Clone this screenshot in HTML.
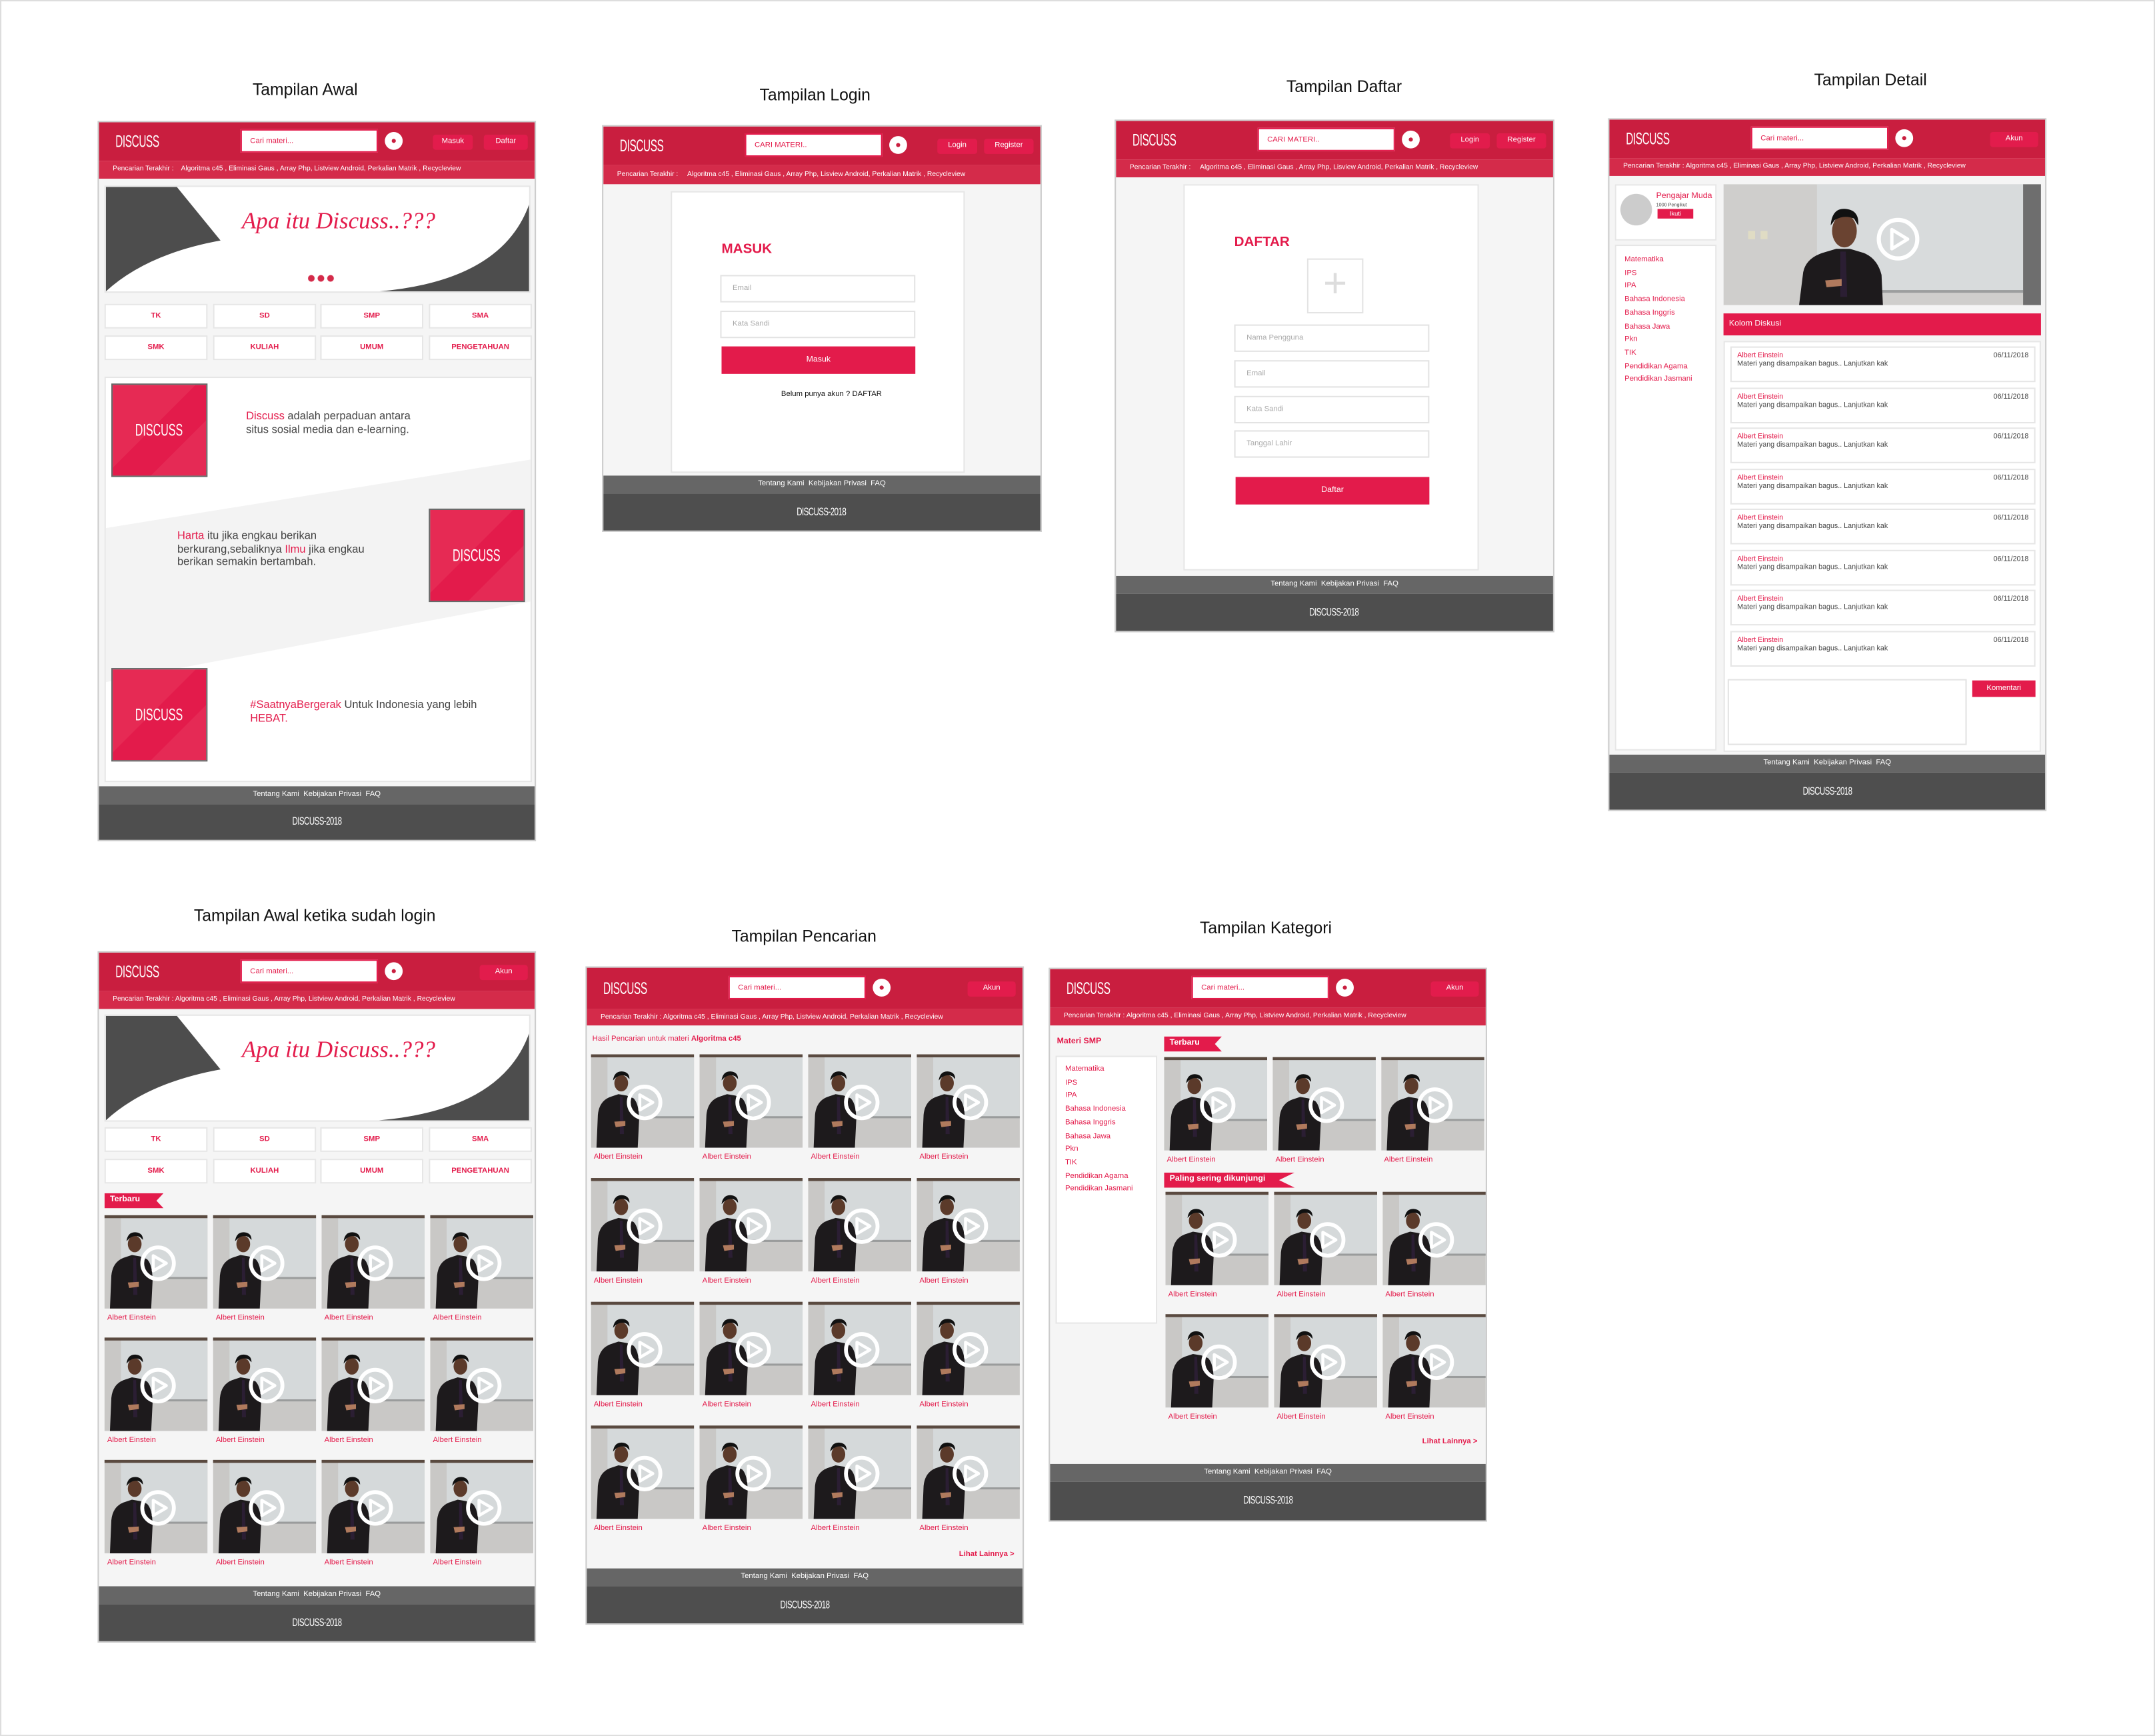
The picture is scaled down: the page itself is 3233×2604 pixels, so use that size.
<!DOCTYPE html>
<html><head><meta charset="utf-8">
<style>
*{margin:0;padding:0;box-sizing:border-box}
html,body{width:3233px;height:2604px;overflow:hidden;background:#fff}
#s{position:absolute;left:0;top:0;width:1568px;height:1263px;transform:scale(2.0619);transform-origin:0 0;font-family:"Liberation Sans",sans-serif;border:1px solid #ddd;background:#fff}
.a{position:absolute}
.tt{position:absolute;font-size:12px;color:#111;text-align:center;width:260px}
.fr{position:absolute;background:#f5f5f5;border:1px solid #ccc;overflow:hidden}
.hd{position:absolute;left:0;top:0;width:100%;height:28px;background:#c91e3f}
.lg{position:absolute;left:12px;top:7px;color:#fff;font-size:12px;transform:scaleX(.62);transform-origin:left;letter-spacing:-.3px}
.sr{position:absolute;left:103px;top:5px;width:100px;height:17px;background:#fff;border:1px solid #e31b4b;font-size:5.5px;color:#e31b4b;padding:5px 6px}
.sc{position:absolute;left:208px;top:7px;width:13px;height:13px;border-radius:50%;background:#fff}
.sc:after{content:"";position:absolute;left:5px;top:5px;width:3px;height:3px;border-radius:50%;background:#c91e3f}
.bt{position:absolute;top:9px;height:11px;background:#e21c4c;border-radius:2px;color:#fff;font-size:5.5px;text-align:center;line-height:11px}
.sb{position:absolute;left:0;top:28px;width:100%;height:13px;background:#d42b4a;color:#fff;font-size:5px;line-height:13px;padding-left:10px;white-space:nowrap;overflow:hidden}
.ft{position:absolute;left:0;right:0;bottom:0}
.fl{height:13px;background:#666;color:#fff;font-size:5.5px;text-align:center;line-height:13px}
.fd{background:#4e4e4e;color:#fff;font-size:8px;text-align:center;letter-spacing:-.4px}
.fd span{display:inline-block;transform:scaleX(.7)}
.cat{position:absolute;width:75px;height:18px;background:#fff;border:1px solid #e6e6e6;color:#e31b4b;font-size:5.5px;font-weight:bold;text-align:center;line-height:16px}
.pk{position:absolute;width:70px;height:68px;background:linear-gradient(135deg,#e62a54 0 45%,#e31b4b 45% 70%,#e52a55 70%);border:1px solid #666;color:#fff;font-size:12px;text-align:center;line-height:66px}
.pk span{display:inline-block;transform:scaleX(.65)}
.tx{position:absolute;font-size:8px;color:#444;line-height:9.5px}
.p{color:#e31b4b}
.g{position:absolute;display:grid;grid-template-columns:repeat(4,75px);column-gap:4px}
.c svg{display:block;width:75px;height:68px}
.c p{font-size:5.5px;color:#e31b4b;margin:4px 0 0 2px}
.rb{position:absolute;height:11px;background:#e31b4b;color:#fff;font-size:6px;font-weight:bold;line-height:11px;padding-left:4px;clip-path:polygon(0 0,100% 0,88% 50%,100% 100%,0 100%)}
.card{position:absolute;background:#fff;border:1px solid #e6e6e6}
.in{position:absolute;height:20px;background:#fff;border:1px solid #e3e3e3;font-size:5.5px;color:#aaa;padding:6px 8px}
.btn{position:absolute;height:20px;background:#e31b4b;color:#fff;font-size:6px;text-align:center;line-height:20px}
.side{position:absolute;background:#fff;border:1px solid #e6e6e6}
.side p{font-size:5.5px;color:#e31b4b;line-height:9.7px}
.cm{position:absolute;left:88px;width:222px;height:26px;background:#fff;border:1px solid #e6e6e6;font-size:5.2px;padding:3px 4px;color:#444}
.cm b{font-weight:normal;color:#e31b4b;display:block}
.cm i{font-style:normal;position:absolute;right:4px;top:3px;color:#444}
</style></head><body>
<svg width="0" height="0" style="position:absolute"><defs>
<symbol id="t" viewBox="0 0 75 68">
<rect width="75" height="68" fill="#c9c8c6"/>
<rect x="12" y="2" width="63" height="44" fill="#d5d9da"/>
<rect x="12" y="45" width="63" height="1.5" fill="#9a9c9c"/>
<rect x="0" y="0" width="75" height="2.2" fill="#5a4a40"/>
<path d="M4 68 L5 44 Q6 34 14 31 L20 29 L26 30 L31 32 Q35 36 35 48 L34 68 Z" fill="#1d1a1c"/>
<path d="M21 31 L23 31 L24 58 L21 58Z" fill="#2b1e33"/>
<ellipse cx="22" cy="21" rx="5" ry="6" fill="#5b3a2a"/>
<path d="M16 19 Q17 12 23 12.5 Q28 13 28 18 L26 16 Q22 14 18 17Z" fill="#111"/>
<path d="M17 49 L25 48.5 L25 52 L18 53Z" fill="#b07a5d"/>
<circle cx="39" cy="35" r="11.5" fill="none" stroke="#fff" stroke-width="2.8"/>
<path d="M35.5 29.5 L35.5 40.5 L45 35 Z" fill="none" stroke="#fff" stroke-width="2.2" stroke-linejoin="round"/>
</symbol>
<symbol id="bn" viewBox="0 0 310 78" preserveAspectRatio="none">
<rect width="310" height="78" fill="#fff"/>
<path d="M0 0 L52 0 L84 40 Q30 50 0 78 Z" fill="#4d4d4d"/>
<path d="M310 13 Q290 70 200 78 L310 78 Z" fill="#4d4d4d"/>
</symbol>
</defs></svg>
<div id="s">

<div class="tt" style="left:91px;top:57px">Tampilan Awal</div>
<div class="tt" style="left:462px;top:61px">Tampilan Login</div>
<div class="tt" style="left:847px;top:55px">Tampilan Daftar</div>
<div class="tt" style="left:1230px;top:50px">Tampilan Detail</div>
<div class="tt" style="left:98px;top:658px">Tampilan Awal ketika sudah login</div>
<div class="tt" style="left:454px;top:673px">Tampilan Pencarian</div>
<div class="tt" style="left:790px;top:667px">Tampilan Kategori</div>

<!-- 1 Awal -->
<div class="fr" style="left:70px;top:87px;width:319px;height:524px">
<div class="hd"><span class="lg">DISCUSS</span><div class="sr">Cari materi...</div><div class="sc"></div><div class="bt" style="left:243px;width:29px">Masuk</div><div class="bt" style="left:280px;width:32px">Daftar</div></div>
<div class="sb">Pencarian Terakhir : &nbsp;&nbsp; Algoritma c45 , Eliminasi Gaus , Array Php, Listview Android, Perkalian Matrik , Recycleview</div>
<svg class="a" style="left:4px;top:46px;width:310px;height:78px;border:1px solid #e6e6e6"><use href="#bn"/></svg>
<div class="a" style="left:104px;top:62px;font:italic 17px 'Liberation Serif',serif;color:#e31b4b">Apa itu Discuss..???</div>
<div class="a" style="left:152px;top:111px;width:20px;height:5px;background:radial-gradient(circle at 2.5px 2.5px,#d42b4a 2.3px,transparent 2.5px) 0 0/7px 5px repeat-x"></div>
<div class="cat" style="left:4px;top:132px">TK</div><div class="cat" style="left:83px;top:132px">SD</div><div class="cat" style="left:161px;top:132px">SMP</div><div class="cat" style="left:240px;top:132px">SMA</div>
<div class="cat" style="left:4px;top:155px">SMK</div><div class="cat" style="left:83px;top:155px">KULIAH</div><div class="cat" style="left:161px;top:155px">UMUM</div><div class="cat" style="left:240px;top:155px">PENGETAHUAN</div>
<div class="a" style="left:4px;top:185px;width:311px;height:295px;background:#fff;border:1px solid #e6e6e6;overflow:hidden">
<div class="a" style="left:0;top:0;width:311px;height:295px;background:#f3f3f3;clip-path:polygon(0 37%,100% 20%,100% 55%,0 75%)"></div>
</div>
<div class="pk" style="left:9px;top:190px"><span>DISCUSS</span></div>
<div class="tx" style="left:107px;top:209px"><span class="p">Discuss</span> adalah perpaduan antara<br>situs sosial media dan e-learning.</div>
<div class="pk" style="left:240px;top:281px"><span>DISCUSS</span></div>
<div class="tx" style="left:57px;top:296px"><span class="p">Harta</span> itu jika engkau berikan<br>berkurang,sebaliknya <span class="p">Ilmu</span> jika engkau<br>berikan semakin bertambah.</div>
<div class="pk" style="left:9px;top:397px"><span>DISCUSS</span></div>
<div class="tx" style="left:110px;top:419px"><span class="p">#SaatnyaBergerak</span> Untuk Indonesia yang lebih<br><span class="p">HEBAT.</span></div>
<div class="ft"><div class="fl">Tentang Kami &nbsp;Kebijakan Privasi &nbsp;FAQ</div><div class="fd" style="height:26px;line-height:26px"><span>DISCUSS-2018</span></div></div>
</div>

<!-- 2 Login -->
<div class="fr" style="left:437px;top:90px;width:320px;height:296px">
<div class="hd"><span class="lg">DISCUSS</span><div class="sr">CARI MATERI..</div><div class="sc"></div><div class="bt" style="left:243px;width:29px">Login</div><div class="bt" style="left:277px;width:36px">Register</div></div>
<div class="sb" style="height:14px;line-height:14px">Pencarian Terakhir : &nbsp;&nbsp;&nbsp; Algoritma c45 , Eliminasi Gaus , Array Php, Lisview Android, Perkalian Matrik , Recycleview</div>
<div class="card" style="left:49px;top:47px;width:214px;height:205px"></div>
<div class="a" style="left:86px;top:84px;font-size:10px;font-weight:bold;color:#e31b4b">MASUK</div>
<div class="in" style="left:85px;top:108px;width:142px">Email</div>
<div class="in" style="left:85px;top:134px;width:142px">Kata Sandi</div>
<div class="btn" style="left:86px;top:160px;width:141px">Masuk</div>
<div class="a" style="left:0;width:320px;top:192px;text-align:center;font-size:5.5px;color:#111;padding-left:12px">Belum punya akun ? DAFTAR</div>
<div class="ft"><div class="fl">Tentang Kami &nbsp;Kebijakan Privasi &nbsp;FAQ</div><div class="fd" style="height:27px;line-height:27px"><span>DISCUSS-2018</span></div></div>
</div>

<!-- 3 Daftar -->
<div class="fr" style="left:810px;top:86px;width:320px;height:373px">
<div class="hd"><span class="lg">DISCUSS</span><div class="sr">CARI MATERI..</div><div class="sc"></div><div class="bt" style="left:243px;width:29px">Login</div><div class="bt" style="left:277px;width:36px">Register</div></div>
<div class="sb">Pencarian Terakhir : &nbsp;&nbsp;&nbsp; Algoritma c45 , Eliminasi Gaus , Array Php, Lisview Android, Perkalian Matrik , Recycleview</div>
<div class="card" style="left:49px;top:46px;width:215px;height:281px"></div>
<div class="a" style="left:86px;top:83px;font-size:10px;font-weight:bold;color:#e31b4b">DAFTAR</div>
<div class="a" style="left:139px;top:100px;width:41px;height:40px;border:1px solid #e3e3e3;background:#fff;color:#ddd;font-size:30px;text-align:center;line-height:36px">+</div>
<div class="in" style="left:86px;top:148px;width:142px">Nama Pengguna</div>
<div class="in" style="left:86px;top:174px;width:142px">Email</div>
<div class="in" style="left:86px;top:200px;width:142px">Kata Sandi</div>
<div class="in" style="left:86px;top:225px;width:142px">Tanggal Lahir</div>
<div class="btn" style="left:87px;top:259px;width:141px">Daftar</div>
<div class="ft"><div class="fl">Tentang Kami &nbsp;Kebijakan Privasi &nbsp;FAQ</div><div class="fd" style="height:27px;line-height:27px"><span>DISCUSS-2018</span></div></div>
</div>

<!-- 4 Detail -->
<div class="fr" style="left:1169px;top:85px;width:319px;height:504px">
<div class="hd"><span class="lg">DISCUSS</span><div class="sr">Cari materi...</div><div class="sc"></div><div class="bt" style="left:277px;width:35px">Akun</div></div>
<div class="sb">Pencarian Terakhir : Algoritma c45 , Eliminasi Gaus , Array Php, Listview Android, Perkalian Matrik , Recycleview</div>
<div class="side" style="left:4px;top:47px;width:74px;height:41px"></div>
<div class="a" style="left:8px;top:54px;width:23px;height:23px;border-radius:50%;background:#ccc"></div>
<div class="a" style="left:34px;top:53px;font-size:6px;color:#e31b4b">Pengajar Muda</div>
<div class="a" style="left:34px;top:60px;font-size:3.5px;color:#444">1000 Pengikut</div>
<div class="a" style="left:35px;top:65px;width:26px;height:7px;background:#e31b4b;color:#fff;font-size:4.5px;text-align:center;line-height:7px">Ikuti</div>
<div class="side" style="left:4px;top:91px;width:74px;height:368px;padding:6px 6px"><p>Matematika</p><p>IPS</p><p>IPA</p><p>Bahasa Indonesia</p><p>Bahasa Inggris</p><p>Bahasa Jawa</p><p>Pkn</p><p>TIK</p><p>Pendidikan Agama</p><p>Pendidikan Jasmani</p></div>
<svg class="a" style="left:83px;top:47px;width:231px;height:88px" viewBox="0 0 231 88">
<rect width="231" height="88" fill="#cfcecc"/>
<rect x="68" y="0" width="150" height="78" fill="#d8dbdc"/>
<rect x="68" y="77" width="150" height="2" fill="#9c9e9e"/>
<rect x="218" y="0" width="13" height="88" fill="#6e6e6e"/>
<rect x="18" y="34" width="5" height="6" fill="#e0dcc4"/><rect x="27" y="34" width="5" height="6" fill="#e0dcc4"/>
<path d="M55 88 L58 64 Q60 54 72 50 L82 47 L92 47 L102 50 Q112 54 115 66 L116 88 Z" fill="#1d1a1c"/>
<path d="M85 49 L89 49 L90 82 L85 82Z" fill="#2b1e33"/>
<ellipse cx="88" cy="34" rx="9" ry="12" fill="#6a4331"/>
<path d="M78 30 Q79 17 89 18 Q99 19 98 30 L95 25 Q88 22 81 26Z" fill="#111"/>
<path d="M74 70 L86 69 L86 74 L75 75Z" fill="#b07a5d"/>
<circle cx="127" cy="40" r="14" fill="none" stroke="#fff" stroke-width="3"/>
<path d="M122.5 33 L122.5 47 L134 40 Z" fill="none" stroke="#fff" stroke-width="2.4" stroke-linejoin="round"/>
</svg>
<div class="a" style="left:83px;top:141px;width:231px;height:16px;background:#e31b4b;color:#fff;font-size:6px;line-height:16px;padding-left:4px">Kolom Diskusi</div>
<div class="side" style="left:83px;top:161px;width:231px;height:299px"></div>
<div class="cm" style="top:165px"><b>Albert Einstein</b>Materi yang disampaikan bagus.. Lanjutkan kak<i>06/11/2018</i></div>
<div class="cm" style="top:195px"><b>Albert Einstein</b>Materi yang disampaikan bagus.. Lanjutkan kak<i>06/11/2018</i></div>
<div class="cm" style="top:224px"><b>Albert Einstein</b>Materi yang disampaikan bagus.. Lanjutkan kak<i>06/11/2018</i></div>
<div class="cm" style="top:254px"><b>Albert Einstein</b>Materi yang disampaikan bagus.. Lanjutkan kak<i>06/11/2018</i></div>
<div class="cm" style="top:283px"><b>Albert Einstein</b>Materi yang disampaikan bagus.. Lanjutkan kak<i>06/11/2018</i></div>
<div class="cm" style="top:313px"><b>Albert Einstein</b>Materi yang disampaikan bagus.. Lanjutkan kak<i>06/11/2018</i></div>
<div class="cm" style="top:342px"><b>Albert Einstein</b>Materi yang disampaikan bagus.. Lanjutkan kak<i>06/11/2018</i></div>
<div class="cm" style="top:372px"><b>Albert Einstein</b>Materi yang disampaikan bagus.. Lanjutkan kak<i>06/11/2018</i></div>
<div class="a" style="left:86px;top:407px;width:174px;height:48px;background:#fff;border:1px solid #e3e3e3"></div>
<div class="a" style="left:264px;top:408px;width:46px;height:12px;background:#e31b4b;color:#fff;font-size:5.5px;text-align:center;line-height:12px">Komentari</div>
<div class="ft"><div class="fl">Tentang Kami &nbsp;Kebijakan Privasi &nbsp;FAQ</div><div class="fd" style="height:27px;line-height:27px"><span>DISCUSS-2018</span></div></div>
</div>

<!-- 5 Awal login -->
<div class="fr" style="left:70px;top:691px;width:319px;height:503px">
<div class="hd"><span class="lg">DISCUSS</span><div class="sr">Cari materi...</div><div class="sc"></div><div class="bt" style="left:277px;width:35px">Akun</div></div>
<div class="sb">Pencarian Terakhir : Algoritma c45 , Eliminasi Gaus , Array Php, Listview Android, Perkalian Matrik , Recycleview</div>
<svg class="a" style="left:4px;top:45px;width:310px;height:78px;border:1px solid #e6e6e6"><use href="#bn"/></svg>
<div class="a" style="left:104px;top:61px;font:italic 17px 'Liberation Serif',serif;color:#e31b4b">Apa itu Discuss..???</div>
<div class="cat" style="left:4px;top:127px">TK</div><div class="cat" style="left:83px;top:127px">SD</div><div class="cat" style="left:161px;top:127px">SMP</div><div class="cat" style="left:240px;top:127px">SMA</div>
<div class="cat" style="left:4px;top:150px">SMK</div><div class="cat" style="left:83px;top:150px">KULIAH</div><div class="cat" style="left:161px;top:150px">UMUM</div><div class="cat" style="left:240px;top:150px">PENGETAHUAN</div>
<div class="rb" style="left:4px;top:175px;width:43px">Terbaru</div>
<div class="g" style="left:4px;top:191px;grid-auto-rows:89px">
<div class="c"><svg><use href="#t"/></svg><p>Albert Einstein</p></div><div class="c"><svg><use href="#t"/></svg><p>Albert Einstein</p></div><div class="c"><svg><use href="#t"/></svg><p>Albert Einstein</p></div><div class="c"><svg><use href="#t"/></svg><p>Albert Einstein</p></div>
<div class="c"><svg><use href="#t"/></svg><p>Albert Einstein</p></div><div class="c"><svg><use href="#t"/></svg><p>Albert Einstein</p></div><div class="c"><svg><use href="#t"/></svg><p>Albert Einstein</p></div><div class="c"><svg><use href="#t"/></svg><p>Albert Einstein</p></div>
<div class="c"><svg><use href="#t"/></svg><p>Albert Einstein</p></div><div class="c"><svg><use href="#t"/></svg><p>Albert Einstein</p></div><div class="c"><svg><use href="#t"/></svg><p>Albert Einstein</p></div><div class="c"><svg><use href="#t"/></svg><p>Albert Einstein</p></div>
</div>
<div class="ft"><div class="fl">Tentang Kami &nbsp;Kebijakan Privasi &nbsp;FAQ</div><div class="fd" style="height:27px;line-height:27px"><span>DISCUSS-2018</span></div></div>
</div>

<!-- 6 Pencarian -->
<div class="fr" style="left:425px;top:702px;width:319px;height:479px">
<div class="hd" style="height:30px"><span class="lg" style="top:8px">DISCUSS</span><div class="sr" style="top:6px">Cari materi...</div><div class="sc" style="top:8px"></div><div class="bt" style="left:277px;width:35px;top:10px">Akun</div></div>
<div class="sb" style="top:30px;height:12px;line-height:12px">Pencarian Terakhir : Algoritma c45 , Eliminasi Gaus , Array Php, Listview Android, Perkalian Matrik , Recycleview</div>
<div class="a" style="left:4px;top:49px;font-size:5.5px;color:#e31b4b">Hasil Pencarian untuk materi <b>Algoritma c45</b></div>
<div class="g" style="left:3px;top:63px;grid-auto-rows:90px">
<div class="c"><svg><use href="#t"/></svg><p>Albert Einstein</p></div><div class="c"><svg><use href="#t"/></svg><p>Albert Einstein</p></div><div class="c"><svg><use href="#t"/></svg><p>Albert Einstein</p></div><div class="c"><svg><use href="#t"/></svg><p>Albert Einstein</p></div>
<div class="c"><svg><use href="#t"/></svg><p>Albert Einstein</p></div><div class="c"><svg><use href="#t"/></svg><p>Albert Einstein</p></div><div class="c"><svg><use href="#t"/></svg><p>Albert Einstein</p></div><div class="c"><svg><use href="#t"/></svg><p>Albert Einstein</p></div>
<div class="c"><svg><use href="#t"/></svg><p>Albert Einstein</p></div><div class="c"><svg><use href="#t"/></svg><p>Albert Einstein</p></div><div class="c"><svg><use href="#t"/></svg><p>Albert Einstein</p></div><div class="c"><svg><use href="#t"/></svg><p>Albert Einstein</p></div>
<div class="c"><svg><use href="#t"/></svg><p>Albert Einstein</p></div><div class="c"><svg><use href="#t"/></svg><p>Albert Einstein</p></div><div class="c"><svg><use href="#t"/></svg><p>Albert Einstein</p></div><div class="c"><svg><use href="#t"/></svg><p>Albert Einstein</p></div>
</div>
<div class="a" style="right:6px;top:424px;font-size:5.5px;font-weight:bold;color:#e31b4b">Lihat Lainnya &gt;</div>
<div class="ft"><div class="fl">Tentang Kami &nbsp;Kebijakan Privasi &nbsp;FAQ</div><div class="fd" style="height:27px;line-height:27px"><span>DISCUSS-2018</span></div></div>
</div>

<!-- 7 Kategori -->
<div class="fr" style="left:762px;top:703px;width:319px;height:403px">
<div class="hd"><span class="lg">DISCUSS</span><div class="sr">Cari materi...</div><div class="sc"></div><div class="bt" style="left:277px;width:35px">Akun</div></div>
<div class="sb">Pencarian Terakhir : Algoritma c45 , Eliminasi Gaus , Array Php, Listview Android, Perkalian Matrik , Recycleview</div>
<div class="a" style="left:5px;top:50px;font-size:6px;font-weight:bold;color:#e31b4b">Materi SMP</div>
<div class="side" style="left:4px;top:63px;width:74px;height:195px;padding:5px 6px"><p>Matematika</p><p>IPS</p><p>IPA</p><p>Bahasa Indonesia</p><p>Bahasa Inggris</p><p>Bahasa Jawa</p><p>Pkn</p><p>TIK</p><p>Pendidikan Agama</p><p>Pendidikan Jasmani</p></div>
<div class="rb" style="left:83px;top:49px;width:42px">Terbaru</div>
<div class="g" style="left:83px;top:64px;grid-template-columns:repeat(3,75px);column-gap:4px;grid-auto-rows:89px">
<div class="c"><svg><use href="#t"/></svg><p>Albert Einstein</p></div><div class="c"><svg><use href="#t"/></svg><p>Albert Einstein</p></div><div class="c"><svg><use href="#t"/></svg><p>Albert Einstein</p></div>
</div>
<div class="rb" style="left:83px;top:148px;width:95px">Paling sering dikunjungi</div>
<div class="g" style="left:84px;top:162px;grid-template-columns:repeat(3,75px);column-gap:4px;grid-auto-rows:89px">
<div class="c"><svg><use href="#t"/></svg><p>Albert Einstein</p></div><div class="c"><svg><use href="#t"/></svg><p>Albert Einstein</p></div><div class="c"><svg><use href="#t"/></svg><p>Albert Einstein</p></div>
<div class="c"><svg><use href="#t"/></svg><p>Albert Einstein</p></div><div class="c"><svg><use href="#t"/></svg><p>Albert Einstein</p></div><div class="c"><svg><use href="#t"/></svg><p>Albert Einstein</p></div>
</div>
<div class="a" style="right:6px;top:341px;font-size:5.5px;font-weight:bold;color:#e31b4b">Lihat Lainnya &gt;</div>
<div class="ft"><div class="fl">Tentang Kami &nbsp;Kebijakan Privasi &nbsp;FAQ</div><div class="fd" style="height:28px;line-height:28px"><span>DISCUSS-2018</span></div></div>
</div>

</div>
</body></html>
